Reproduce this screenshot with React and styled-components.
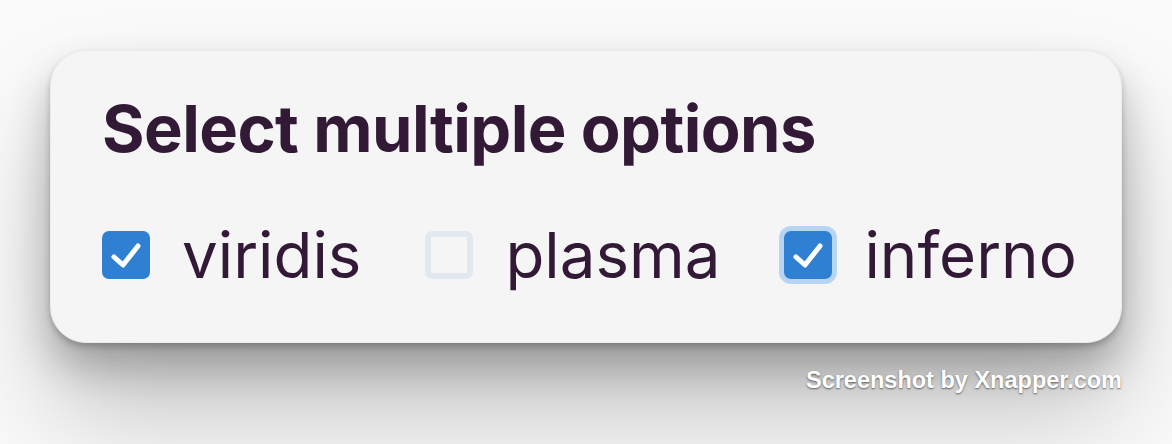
import React, { useState } from "react";
import styled, { createGlobalStyle } from "styled-components";

const Global = createGlobalStyle`
  html, body { margin: 0; padding: 0; }
  body {
    background: #fafafa;
    width: 1172px;
    height: 444px;
    overflow: hidden;
    font-family: Inter, "Noto Sans", sans-serif;
  }
`;

const Page = styled.div`
  padding: 50px 50px 0 50px;
  display: flex;
  flex-direction: column;
  align-items: stretch;
`;

const Card = styled.div`
  box-sizing: border-box;
  width: 1072px;
  height: 293px;
  background: #f5f5f6;
  border-radius: 36px;
  border: 1px solid #ececee;
  padding: 38px 52px 0 51px;
  display: flex;
  flex-direction: column;
  box-shadow: 0 4px 6px rgba(0, 0, 0, 0.2), 0 24px 40px rgba(0, 0, 0, 0.24),
    0 70px 110px rgba(0, 0, 0, 0.22);
`;

const Title = styled.h1`
  margin: 0;
  font-family: Inter, sans-serif;
  font-weight: 700;
  font-size: 65px;
  line-height: 80px;
  letter-spacing: -0.55px;
  color: #321a36;
`;

const Row = styled.div`
  display: flex;
  align-items: center;
  margin-top: 51px;
  gap: 64px;
`;

const Option = styled.label`
  display: flex;
  align-items: center;
  gap: 32px;
  cursor: pointer;
`;

const Box = styled.span`
  box-sizing: border-box;
  width: 48px;
  height: 48px;
  border-radius: 7px;
  display: flex;
  align-items: center;
  justify-content: center;
  background: ${(p) => (p.$checked ? "#2f80d3" : "#f5f5f6")};
  border: ${(p) => (p.$checked ? "none" : "6px solid #e2e8f0")};
  box-shadow: ${(p) => (p.$focused ? "0 0 0 5px #b7d5f3" : "none")};
`;

const Label = styled.span`
  font-family: Inter, sans-serif;
  font-weight: 400;
  font-size: 63.6px;
  line-height: 70px;
  color: #321a36;
`;

const Watermark = styled.div`
  width: 1072px;
  margin-top: 24px;
  text-align: right;
  font-family: "Liberation Sans", Arial, sans-serif;
  font-weight: 700;
  font-size: 23.5px;
  color: #ffffff;
  text-shadow: 0 1px 2px rgba(0, 0, 0, 0.55);
`;

const Check = () => (
  <svg width="48" height="48" viewBox="0 0 48 48">
    <path
      d="M12 26 L21 34 L36 15"
      fill="none"
      stroke="#ffffff"
      strokeWidth="5"
      strokeLinecap="round"
      strokeLinejoin="round"
    />
  </svg>
);

const options = [
  { name: "viridis", checked: true, focused: false },
  { name: "plasma", checked: false, focused: false },
  { name: "inferno", checked: true, focused: true },
];

export default function App() {
  const [state, setState] = useState(options);
  const toggle = (i) =>
    setState((s) => s.map((o, j) => (j === i ? { ...o, checked: !o.checked } : o)));
  return (
    <>
      <Global />
      <Page>
        <Card>
          <Title>Select multiple options</Title>
          <Row>
            {state.map((o, i) => (
              <Option key={o.name} onClick={() => toggle(i)}>
                <Box $checked={o.checked} $focused={o.focused}>
                  {o.checked && <Check />}
                </Box>
                <Label>{o.name}</Label>
              </Option>
            ))}
          </Row>
        </Card>
        <Watermark>Screenshot by Xnapper.com</Watermark>
      </Page>
    </>
  );
}
